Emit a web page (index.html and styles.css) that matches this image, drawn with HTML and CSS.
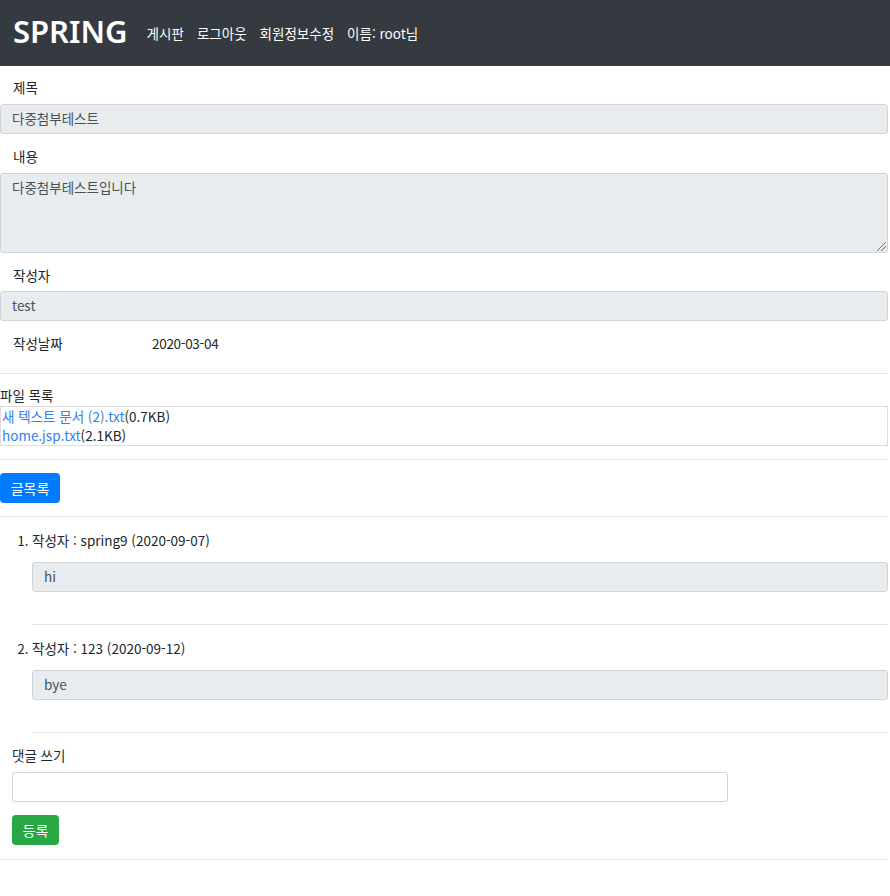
FILE: index.html
```html
<!DOCTYPE html>
<html lang="ko">
<head>
<meta charset="utf-8">
<title>SPRING</title>
<link rel="stylesheet" href="styles.css">
</head>
<body>
<header class="navbar">
  <span class="brand">SPRING</span>
  <nav class="nav">
    <a class="nav-link">게시판</a>
    <a class="nav-link">로그아웃</a>
    <a class="nav-link">회원정보수정</a>
    <span class="nav-link">이름: root님</span>
  </nav>
</header>
<main class="page">
  <label class="lbl">제목</label>
  <div class="field">다중첨부테스트</div>
  <label class="lbl">내용</label>
  <div class="field area">다중첨부테스트입니다<span class="grip"></span></div>
  <label class="lbl">작성자</label>
  <div class="field">test</div>
  <div class="date-row"><span class="date-lbl">작성날짜</span><span class="date-val">2020-03-04</span></div>
  <hr class="rule">
  <div class="files-title">파일 목록</div>
  <div class="files">
    <div><a class="file-link">새 텍스트 문서 (2).txt</a>(0.7KB)</div>
    <div><a class="file-link">home.jsp.txt</a>(2.1KB)</div>
  </div>
  <hr class="rule gap13">
  <button class="btn btn-blue">글목록</button>
  <hr class="rule gap13">
  <ol class="replies">
    <li class="reply">
      <div class="reply-head">작성자 : spring9 (2020-09-07)</div>
      <div class="field">hi</div>
      <hr class="rule reply-rule">
    </li>
    <li class="reply">
      <div class="reply-head">작성자 : 123 (2020-09-12)</div>
      <div class="field">bye</div>
      <hr class="rule reply-rule">
    </li>
  </ol>
  <div class="write">
    <div class="write-lbl">댓글 쓰기</div>
    <div class="field white"></div>
    <button class="btn btn-green">등록</button>
  </div>
  <hr class="rule last">
</main>
</body>
</html>
```
FILE: styles.css
```css
* { box-sizing: border-box; }
html, body { margin: 0; padding: 0; background: #fff; }
body {
  font-family: "Noto Sans CJK KR", "Noto Sans", sans-serif;
  font-size: 13.5px;
  color: #212529;
  line-height: 20px;
}
.navbar {
  height: 66px;
  background: #343a40;
  display: flex;
  align-items: center;
  padding: 0 13px;
  color: #fff;
}
.brand {
  font-family: "Noto Sans", "Noto Sans CJK KR", sans-serif;
  font-size: 31px;
  font-weight: 600;
  margin-right: 19px;
  line-height: 40px;
  margin-top: -4px;
}
.nav { display: flex; gap: 13px; align-items: center; }
.nav-link { color: #fff; font-size: 13.5px; font-weight: 400; }
.page { width: 888px; }
.lbl { display: block; padding-left: 13px; margin: 11px 0 7px; }
.field {
  height: 30px;
  border: 1px solid #ced4da;
  border-radius: 3px;
  background: #e9ecef;
  color: #495057;
  padding: 3px 11px 5px;
  line-height: 20px;
}
.area { height: 80px; position: relative; }
.grip {
  position: absolute; right: 1px; bottom: 1px; width: 9px; height: 9px;
  background: linear-gradient(135deg, transparent 45%, #777 46%, #777 52%, transparent 53%, transparent 70%, #777 71%, #777 77%, transparent 78%);
}
.page > .lbl:nth-of-type(2) { margin-top: 12px; }
.page > .lbl:nth-of-type(3) { margin: 12px 0 6px; }
.date-row { display: flex; padding-left: 13px; margin-top: 12px; }
.date-lbl { width: 139px; }
.date-val { letter-spacing: -0.3px; }
.rule { border: 0; border-top: 1px solid #e5e5e5; margin: 20px 0 0; height: 0; }
.files-title { margin-top: 11px; margin-bottom: 1px; }
.files { border: 1px solid #dcdcdc; line-height: 19px; padding: 0 1px; }
.file-link { color: #3080f0; }
.gap13 { margin-top: 13px; }
.btn {
  display: block;
  border: 0;
  border-radius: 4px;
  color: #fff;
  font-family: inherit;
  font-size: 14px;
  height: 30px;
  line-height: 29px;
  padding: 0;
  text-align: center;
  margin-top: 13px;
}
.btn-blue { background: #007bff; width: 60px; }
.btn-green { background: #28a745; width: 47px; }
.replies { margin: 0; padding: 0 0 0 32px; }
.reply { margin-top: 13px; padding-left: 0; }
.reply::marker { font-size: 13px; }
.reply-head { margin-bottom: 12px; }
.reply-rule { margin-top: 32px; }
.write { padding-left: 12px; margin-top: 12px; }
.write-lbl { margin-bottom: 7px; }
.white { background: #fff; width: 716px; }
.last { margin-top: 14px; }
```
